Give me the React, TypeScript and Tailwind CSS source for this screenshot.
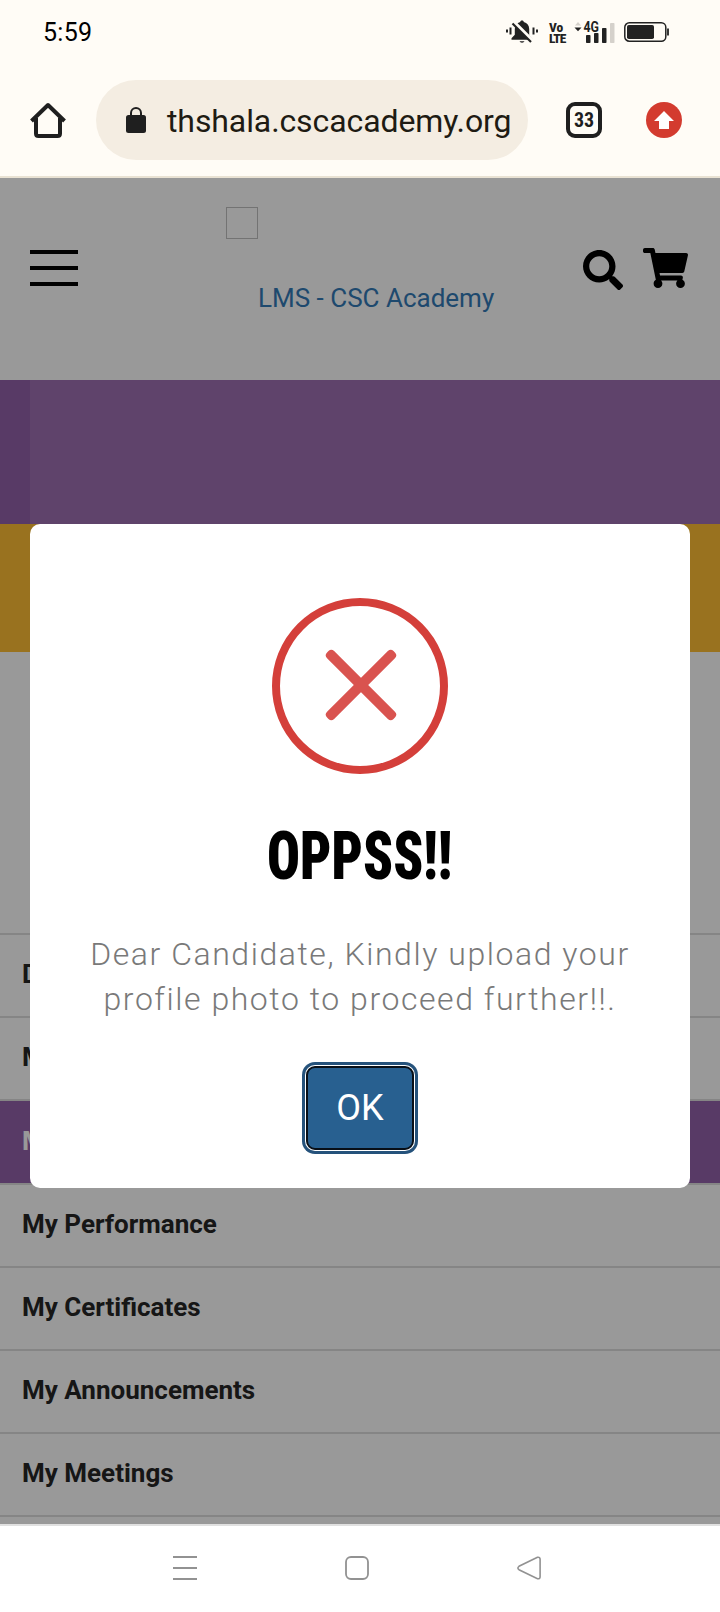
import { FaSearch, FaShoppingCart } from "react-icons/fa"

const menuItems = [
  { label: "Dashboard", active: false },
  { label: "My Profile", active: false },
  { label: "My Courses", active: true },
  { label: "My Performance", active: false },
  { label: "My Certificates", active: false },
  { label: "My Announcements", active: false },
  { label: "My Meetings", active: false },
]

function MutedBellIcon() {
  return (
    <svg className="-ml-px" width="34" height="24" viewBox="0 0 34 24" fill="#222">
      <path d="M17 0.500c1.200 0 1.800.700 1.800 1.600 3.400.800 5.400 3.400 5.400 6.900v6.200l3.300 3.800v.800H6.500v-1.600l3.300-3.400V9c0-3.500 2-6.100 5.400-6.900 0-.900.600-1.600 1.800-1.600z" />
      <path d="M14.500 21.300h5a2.600 2 0 0 1-5 0z" />
      <path d="M7.500 1 28.500 22" stroke="#fffcf6" strokeWidth="4" />
      <path d="M7.500 3.500 26 22" stroke="#222" strokeWidth="2.200" />
      <path d="M5.500 7.500v7M28.500 7.500v7" stroke="#222" strokeWidth="2" />
      <path d="M2 9.500v3M32 9.500v3" stroke="#222" strokeWidth="2" />
    </svg>
  )
}

function VolteIcon() {
  return (
    <div className="ml-[9px] flex w-[19px] flex-col gap-px pl-px text-[#222] font-extrabold [font-stretch:75%]">
      <span className="h-[10px] text-[13.5px] leading-[10px]">Vo</span>
      <span className="h-[10px] text-[13.5px] leading-[10px] tracking-[-0.9px]">LTE</span>
    </div>
  )
}

function SignalIcon() {
  return (
    <svg className="overflow-visible" width="42" height="24" viewBox="0 0 42 24" fill="#222">
      <path d="M2 5.500 5 2l3 3.500z" fill="#d5d1cb" />
      <path d="M1.500 7.500h7L5 11.300z" />
      <text x="10.500" y="12" fontSize="15" fontWeight="700" textLength="15.500" lengthAdjust="spacingAndGlyphs">
        4G
      </text>
      <rect x="13" y="15" width="4.500" height="8" rx="0.800" />
      <rect x="21" y="13" width="4.500" height="10" rx="0.800" />
      <rect x="29" y="8" width="4.500" height="15" rx="0.800" />
      <rect x="37" y="3" width="4.500" height="20" rx="0.800" fill="#d5d1cb" />
    </svg>
  )
}

function BatteryIcon() {
  return (
    <svg width="46" height="20" viewBox="0 0 46 20" fill="none">
      <rect x="0.800" y="0.800" width="41" height="18.400" rx="4.500" stroke="#222" strokeWidth="1.500" />
      <rect x="3" y="3" width="27" height="14" rx="1.800" fill="#222" />
      <path d="M44 6.500v7" stroke="#222" strokeWidth="1.800" />
    </svg>
  )
}

function StatusBar() {
  return (
    <div className="flex h-16 items-center pl-[43px]">
      <span className="w-[463px] pt-px text-[25px] leading-none tracking-[0.3px] text-black">5:59</span>
      <div className="flex items-center">
        <MutedBellIcon />
        <VolteIcon />
        <div className="ml-[6px]">
          <SignalIcon />
        </div>
        <div className="ml-[9px]">
          <BatteryIcon />
        </div>
      </div>
    </div>
  )
}

function BrowserBar() {
  return (
    <div className="flex h-[114px] items-start border-b-2 border-[#e9e2d3] pt-4 pl-[30px]">
      <div className="flex h-20 items-center">
        <svg width="36" height="36" viewBox="0 0 36 36" fill="none" stroke="#1f1f1f" strokeWidth="4">
          <path d="M6 16v15.500q0 2.500 2.500 2.500h19q2.500 0 2.500-2.500V16" />
          <path d="M1.500 19 18 3l16.500 16" strokeLinejoin="round" />
        </svg>
        <div className="ml-[30px] flex h-20 w-[432px] items-center rounded-full bg-[#f4ede2] pl-[30px]">
          <svg width="20" height="26" viewBox="0 0 20 26">
            <path d="M5 10V6a5 5 0 0 1 10 0v4" fill="none" stroke="#1f1f1f" strokeWidth="2" />
            <rect y="8" width="20" height="18" rx="2.500" fill="#1f1f1f" />
          </svg>
          <span className="ml-[21px] pt-[2px] text-[32px] leading-none tracking-[-0.1px] whitespace-nowrap text-[#1e1b13]">
            thshala.cscacademy.org
          </span>
        </div>
        <div className="ml-[38px] flex h-9 w-9 items-center justify-center rounded-[9px] border-4 border-[#1f1f1f]">
          <span className="text-[20px] leading-none font-bold text-[#1f1f1f] [font-stretch:75%]">33</span>
        </div>
        <svg className="ml-[44px]" width="36" height="36" viewBox="0 0 36 36">
          <circle cx="18" cy="18" r="18" fill="#d33b2f" />
          <path d="M18 9 28 19h-5v8H13v-8H8z" fill="#fff" />
        </svg>
      </div>
    </div>
  )
}

function SiteHeader() {
  return (
    <header className="flex h-[202px] items-start bg-white pl-[30px]">
      <button type="button" className="mt-[72px] flex flex-col gap-3">
        <span className="h-1 w-12 bg-black" />
        <span className="h-1 w-12 bg-black" />
        <span className="h-1 w-12 bg-black" />
      </button>
      <a className="mt-[29px] ml-[148px] flex w-[357px] items-start text-[26px] text-[#337ab7]">
        <span className="h-8 w-8 shrink-0 border border-[#c0c0c0]" />
        <span className="mt-[78px] leading-none whitespace-nowrap">LMS - CSC Academy</span>
      </a>
      <FaSearch className="mt-[72px] h-10 w-10 text-black" />
      <FaShoppingCart className="mt-[70px] ml-[20px] h-10 w-[45px] text-black" />
    </header>
  )
}

function ErrorDialog() {
  return (
    <div className="absolute inset-x-[30px] top-[346px] flex h-[664px] flex-col items-center rounded-[10px] bg-white">
      <div className="mt-[74px] flex h-44 w-44 items-center justify-center rounded-full border-8 border-[#d43f3a]">
        <svg className="mt-[-2px] ml-[2px]" width="80" height="80" viewBox="0 0 80 80" fill="#d9534f">
          <rect x="-7" y="35" width="94" height="10" rx="4" transform="rotate(45 40 40)" />
          <rect x="-7" y="35" width="94" height="10" rx="4" transform="rotate(-45 40 40)" />
        </svg>
      </div>
      <h2 className="mt-[50px] text-[66px] leading-[66px] font-black text-black [font-stretch:75%] [transform:scaleX(0.83)]">
        OPPSS!!
      </h2>
      <p className="mt-[42px] text-center text-[32px] leading-[45px] font-light tracking-[1.55px] text-[#797979]">
        Dear Candidate, Kindly upload your
        <br />
        profile photo to proceed further!!.
      </p>
      <button
        type="button"
        className="mt-[44px] h-[84px] w-[108px] rounded-[9px] border-2 border-[#080f17] bg-[#286090] text-[36px] leading-none text-white shadow-[0_0_0_1px_#fff,0_0_0_4px_#25527b]"
      >
        OK
      </button>
    </div>
  )
}

function NavigationBar() {
  return (
    <div className="flex h-[88px] items-start border-t-2 border-[#e0e0e0] bg-white pt-[30px] pl-[173px]">
      <svg width="24" height="24" viewBox="0 0 24 24" stroke="#929292" strokeWidth="1.800">
        <path d="M0 1h24M0 12h24M0 23h24" />
      </svg>
      <svg className="ml-[148px]" width="24" height="24" viewBox="0 0 24 24" fill="none" stroke="#929292" strokeWidth="1.800">
        <rect x="1" y="1" width="22" height="22" rx="5" />
      </svg>
      <svg className="ml-[148px]" width="24" height="24" viewBox="0 0 24 24" fill="none" stroke="#929292" strokeWidth="1.600">
        <path d="M20.500 1.300 2 10.300q-2.200 1.700 0 3.400l18.500 9q2.600.5 2.600-2V3.300q0-2.500-2.600-2z" />
      </svg>
    </div>
  )
}

export default function App() {
  return (
    <div className="flex h-[1612px] w-[720px] flex-col overflow-hidden bg-[#fffcf6] font-[Roboto,sans-serif]">
      <StatusBar />
      <BrowserBar />
      <main className="relative h-[1346px] overflow-hidden bg-white">
        <SiteHeader />
        <div className="h-36 bg-[#9361aa] pl-[30px]">
          <div className="h-full bg-[#9e71b2]" />
        </div>
        <div className="h-32 bg-[#ffbe35]" />
        <nav className="mt-[281px] border-t-2 border-[#dedede]">
          {menuItems.map((item) => (
            <div
              key={item.label}
              className={`flex items-center border-b-2 border-[#dedede] pl-[22px] text-[26px] font-bold ${
                item.active ? "h-[84px] bg-[#9361aa] text-white" : "h-[83px] text-[#262626]"
              }`}
            >
              <span className="-mt-0.5">{item.label}</span>
            </div>
          ))}
        </nav>
        <div className="absolute inset-0 bg-black/40" />
        <ErrorDialog />
      </main>
      <NavigationBar />
    </div>
  )
}
